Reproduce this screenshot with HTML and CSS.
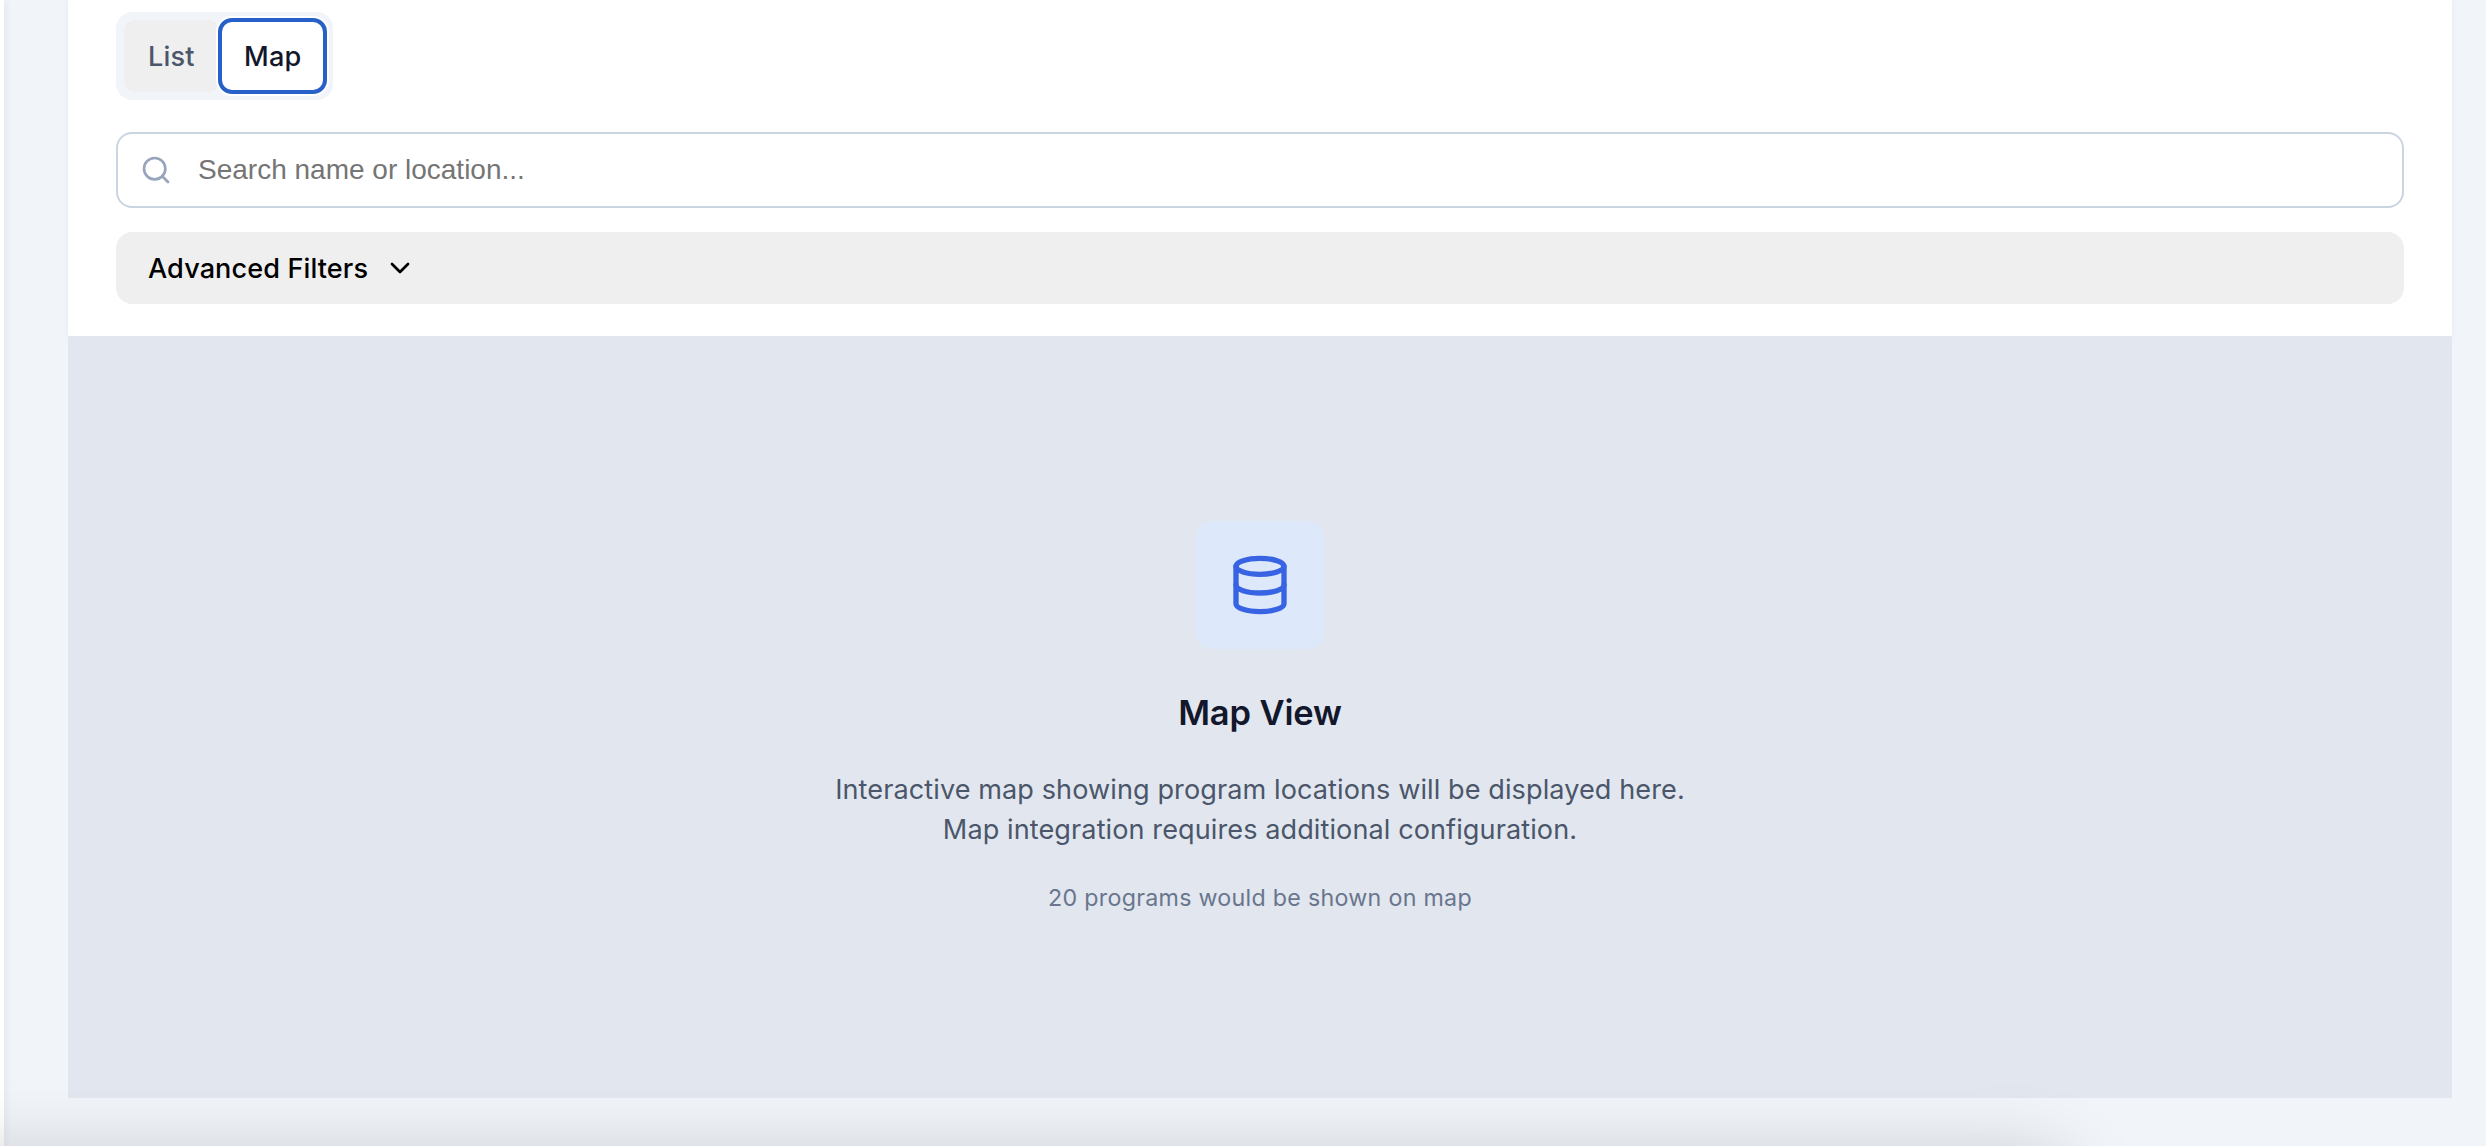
FILE: index.html
```html
<!DOCTYPE html>
<html lang="en">
<head>
<meta charset="utf-8">
<title>Programs</title>
<link rel="stylesheet" href="styles.css">
</head>
<body>
<div class="app">
  <aside class="sidebar-edge"></aside>
  <main class="content">
    <section class="panel">
      <div class="toolbar">
        <div class="toggle">
          <button class="toggle-btn" type="button">List</button>
          <button class="toggle-btn active" type="button">Map</button>
        </div>
        <label class="search">
          <svg class="search-icon" viewBox="0 0 24 24"><circle cx="11" cy="11" r="8"/><path d="m21 21-4.3-4.3"/></svg>
          <span class="placeholder">Search name or location...</span>
        </label>
        <button class="filters" type="button">
          <span>Advanced Filters</span>
          <svg class="chevron" viewBox="0 0 24 24"><path d="m6 9 6 6 6-6"/></svg>
        </button>
      </div>
      <div class="map">
        <div class="tile">
          <svg class="db-icon" viewBox="0 0 24 24"><ellipse cx="12" cy="5" rx="9" ry="3"/><path d="M3 5v14a9 3 0 0 0 18 0V5"/><path d="M3 12a9 3 0 0 0 18 0"/></svg>
        </div>
        <h3 class="title">Map View</h3>
        <p class="text">Interactive map showing program locations will be displayed here.<br>Map integration requires additional configuration.</p>
        <p class="note">20 programs would be shown on map</p>
      </div>
    </section>
  </main>
  <div class="bottom-shade"></div>
</div>
</body>
</html>
```
FILE: styles.css
```css
* { box-sizing: border-box; }
body {
  margin: 0;
  font-family: Inter, "Liberation Sans", sans-serif;
  background: #f1f5fa;
}
button { font: inherit; border: 0; margin: 0; }
svg { fill: none; stroke: currentColor; stroke-width: 2; stroke-linecap: round; stroke-linejoin: round; flex: none; }
.app { position: relative; display: flex; height: 1146px; overflow: hidden; }
.sidebar-edge { width: 4px; background: #fff; box-shadow: 0 0 10px rgba(0, 0, 0, 0.12); }
.content { flex: 1; padding: 0 34px 48px 64px; }
.panel { height: 1098px; display: flex; flex-direction: column; }
.toolbar {
  height: 336px;
  padding: 12px 48px 0;
  background: #fff;
  box-shadow: 0 0 5px rgba(0, 0, 0, 0.06);
  display: flex;
  flex-direction: column;
  align-items: stretch;
}
.toggle {
  align-self: flex-start;
  display: flex;
  width: 217px;
  height: 88px;
  padding: 8px;
  border-radius: 16px;
  background: #f1f5fa;
}
.toggle-btn {
  flex: 0 0 96px;
  padding: 0 0 0 24px;
  text-align: left;
  border-radius: 12px;
  background: #efefef;
  color: #4b566a;
  font-size: 27.1px;
  font-weight: 500;
  letter-spacing: 0.2px;
}
.toggle-btn.active {
  flex: 0 0 105px;
  color: #13172b;
  background: #fff;
  outline: 4px solid #2860c9;
  outline-offset: -2px;
  box-shadow: 0 0 0 4px #fff;
}
.search {
  height: 76px;
  margin-top: 32px;
  padding-left: 22px;
  display: flex;
  align-items: center;
  border: 2px solid #cbd5e1;
  border-radius: 16px;
  background: #fff;
}
.search-icon { width: 32px; height: 32px; color: #97a4bb; }
.placeholder { margin-left: 26px; font: 28px "Liberation Sans", Arial, sans-serif; color: #757575; }
.filters {
  height: 72px;
  margin-top: 24px;
  padding: 0 32px;
  display: flex;
  align-items: center;
  gap: 16px;
  border-radius: 16px;
  background: #efefef;
  color: #000;
  font-size: 27.1px;
  font-weight: 500;
  letter-spacing: 0.1px;
}
.chevron { width: 32px; height: 32px; }
.map {
  flex: 1;
  padding-top: 185px;
  display: flex;
  flex-direction: column;
  align-items: center;
  text-align: center;
  background: #e2e7ef;
}
.tile {
  width: 128px;
  height: 128px;
  display: flex;
  align-items: center;
  justify-content: center;
  border-radius: 16px;
  background: #dde8fb;
  color: #3864e3;
}
.db-icon { width: 64px; height: 64px; }
.title { margin: 37px 0 0; font-size: 34.5px; line-height: 54px; font-weight: 600; letter-spacing: -0.15px; color: #13172b; }
.text { margin: 30px 0 0; font-size: 27.1px; line-height: 40px; letter-spacing: 0.08px; color: #4b566a; }
.note { margin: 32px 0 0; font-size: 23.25px; line-height: 32px; letter-spacing: 0.27px; color: #69768d; }
/* shadow cast by the floating bar just below the viewport */
.bottom-shade {
  position: absolute;
  left: -100px;
  top: 1162px;
  width: 2160px;
  height: 100px;
  box-shadow: 0 0 80px rgba(0, 0, 0, 0.22);
}
```
